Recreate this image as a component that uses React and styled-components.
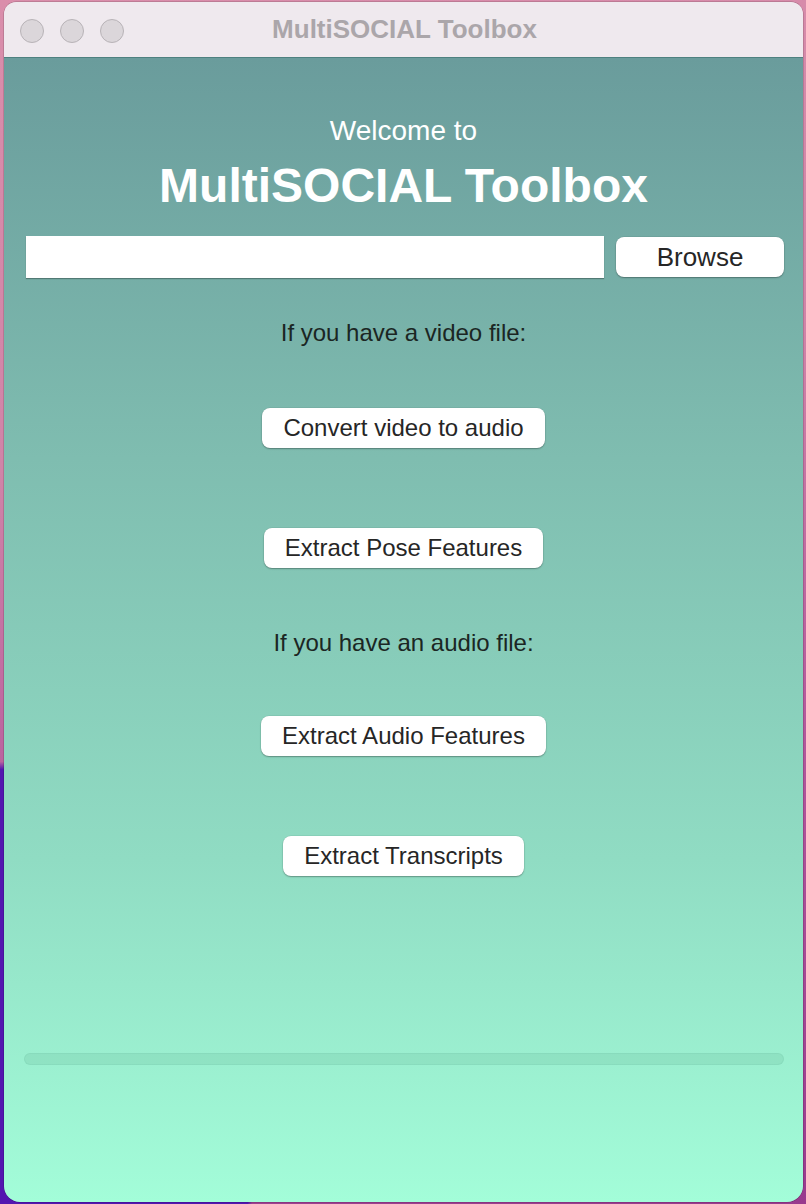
import React from "react";
import styled, { createGlobalStyle } from "styled-components";

const GlobalStyle = createGlobalStyle`
  html, body {
    margin: 0;
    padding: 0;
  }
  body {
    width: 806px;
    height: 1204px;
    overflow: hidden;
    font-family: "Liberation Sans", Arial, Helvetica, sans-serif;
    background:
      radial-gradient(ellipse 450px 790px at 0% 100%, #5316b0 0%, #5316b0 55%, rgba(83, 22, 176, 0) 56%),
      linear-gradient(170deg, #da8eab 0%, #d084a8 35%, #b3579c 65%, #983a8e 100%);
  }
`;

const Window = styled.div`
  margin: 2px 0 0 4px;
  width: 799px;
  height: 1200px;
  border-radius: 12px 12px 16px 16px;
  overflow: hidden;
  display: flex;
  flex-direction: column;
  box-shadow: 0 0 0 0.5px rgba(0, 0, 0, 0.25);
`;

const TitleBar = styled.div`
  height: 55px;
  flex-shrink: 0;
  background: #efe9ee;
  border-bottom: 1px solid #4e8180;
  display: flex;
  align-items: center;
  position: relative;
`;

const Lights = styled.div`
  display: flex;
  gap: 16px;
  padding-left: 16px;
  padding-top: 2px;
`;

const Light = styled.span`
  width: 22px;
  height: 22px;
  border-radius: 50%;
  background: #dbd6da;
  border: 1px solid #b8b3b7;
`;

const WindowTitle = styled.div`
  position: absolute;
  left: 0;
  right: 0;
  top: 0;
  bottom: 0;
  display: flex;
  align-items: center;
  justify-content: center;
  font-size: 26px;
  font-weight: bold;
  color: #aba6aa;
  padding-left: 2px;
  pointer-events: none;
`;

const Content = styled.div`
  flex: 1;
  background: linear-gradient(180deg, #6a9c9c 0%, #7fbdb0 35%, #90dcc3 70%, #a3fdd9 100%);
  display: flex;
  flex-direction: column;
  align-items: center;
`;

const Welcome = styled.div`
  margin-top: 59px;
  font-size: 28px;
  line-height: 28px;
  color: #ffffff;
`;

const Heading = styled.h1`
  margin: 17px 0 0;
  font-size: 48px;
  line-height: 48px;
  font-weight: bold;
  color: #ffffff;
`;

const FileRow = styled.div`
  margin-top: 26px;
  align-self: stretch;
  display: flex;
  align-items: center;
  gap: 12px;
  padding: 0 19px 0 22px;
  height: 42px;
`;

const PathInput = styled.input`
  flex: 1;
  height: 42px;
  box-sizing: border-box;
  border: none;
  outline: none;
  background: #ffffff;
  box-shadow: 0 1px 1px rgba(0, 0, 0, 0.3);
  font-family: inherit;
  font-size: 22px;
  padding: 0 8px;
`;

const Button = styled.button`
  margin-top: ${({ $top }) => $top || 0}px;
  height: 40px;
  width: ${({ $width }) => ($width ? `${$width}px` : "auto")};
  padding: 0 21px;
  border: none;
  border-radius: 8px;
  background: #ffffff;
  box-shadow: 0 1px 1.5px rgba(0, 0, 0, 0.3), 0 0 0 0.5px rgba(0, 0, 0, 0.08);
  font-family: inherit;
  font-size: ${({ $size }) => $size || 24}px;
  color: #262626;
  cursor: pointer;
  white-space: nowrap;
`;

const Label = styled.div`
  margin-top: ${({ $top }) => $top}px;
  font-size: 24px;
  line-height: 24px;
  color: #1b2623;
`;

const Progress = styled.div`
  margin-top: 177px;
  align-self: stretch;
  margin-left: 20px;
  margin-right: 19px;
  height: 12px;
  box-sizing: border-box;
  border-radius: 6px;
  background: rgba(40, 120, 90, 0.1);
  border: 1px solid rgba(40, 110, 80, 0.06);
`;

export default function App() {
  return (
    <>
      <GlobalStyle />
      <Window>
        <TitleBar>
          <Lights>
            <Light />
            <Light />
            <Light />
          </Lights>
          <WindowTitle>MultiSOCIAL Toolbox</WindowTitle>
        </TitleBar>
        <Content>
          <Welcome>Welcome to</Welcome>
          <Heading>MultiSOCIAL Toolbox</Heading>
          <FileRow>
            <PathInput type="text" />
            <Button $width={168} $size={26}>Browse</Button>
          </FileRow>
          <Label $top={43}>If you have a video file:</Label>
          <Button $top={63}>Convert video to audio</Button>
          <Button $top={80}>Extract Pose Features</Button>
          <Label $top={63}>If you have an audio file:</Label>
          <Button $top={61}>Extract Audio Features</Button>
          <Button $top={80}>Extract Transcripts</Button>
          <Progress />
        </Content>
      </Window>
    </>
  );
}
